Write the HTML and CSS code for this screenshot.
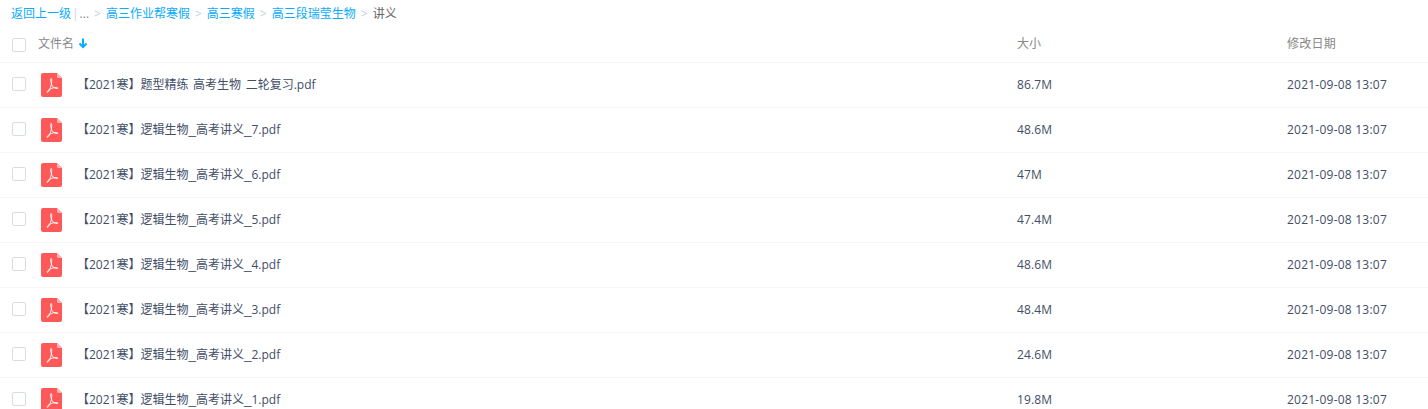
FILE: index.html
```html
<!DOCTYPE html>
<html lang="zh-CN">
<head>
<meta charset="utf-8">
<title>讲义</title>
<link rel="stylesheet" href="styles.css">
</head>
<body>
<svg class="defs" width="0" height="0">
	<symbol id="pdf" viewBox="0 0 21 24">
		<path d="M2 0H16L21 5V22a2 2 0 0 1-2 2H2a2 2 0 0 1-2-2V2a2 2 0 0 1 2-2Z" fill="#ff5858"/>
		<path d="M16 0L21 5H17.500a1.500 1.500 0 0 1-1.500-1.500Z" fill="#ffb4b4"/>
		<path d="M10 5.500C9 6 10 10 11 12.500C12 14.500 14 15.500 16 15.500C17.500 15.500 17 14.500 15 14.500C12 14.500 8 16 6.500 18C5.500 19.500 6.500 20 7.500 18.500C9 16.500 10.500 12.500 10.700 8.500C10.800 6.500 10.600 5.300 10 5.500Z" fill="none" stroke="#fff" stroke-width="1" stroke-opacity=".9"/>
	</symbol>
</svg>

<div class="crumbs">
	<a href="#">返回上一级</a><span class="pipe">|</span><span class="dots">...</span><span class="sep">&gt;</span><a href="#">高三作业帮寒假</a><span class="sep">&gt;</span><a href="#">高三寒假</a><span class="sep">&gt;</span><a href="#">高三段瑞莹生物</a><span class="sep">&gt;</span><span class="current">讲义</span>
</div>

<div class="row head">
	<span class="check"></span>
	<div class="name">文件名 <svg class="arrow" width="10" height="11" viewBox="0 0 10 11"><path d="M5 0.500V9M1.500 5.500L5 9L8.500 5.500" fill="none" stroke="#09aaff" stroke-width="2"/></svg></div>
	<div class="size">大小</div>
	<div class="date">修改日期</div>
</div>

<div class="row">
	<span class="check"></span>
	<svg class="icon"><use href="#pdf"/></svg>
	<div class="name">【2021寒】题型精练 高考生物 二轮复习.pdf</div>
	<div class="size">86.7M</div>
	<div class="date">2021-09-08 13:07</div>
</div>
<div class="row">
	<span class="check"></span>
	<svg class="icon"><use href="#pdf"/></svg>
	<div class="name">【2021寒】逻辑生物<span class="us">_</span>高考讲义<span class="us">_</span>7.pdf</div>
	<div class="size">48.6M</div>
	<div class="date">2021-09-08 13:07</div>
</div>
<div class="row">
	<span class="check"></span>
	<svg class="icon"><use href="#pdf"/></svg>
	<div class="name">【2021寒】逻辑生物<span class="us">_</span>高考讲义<span class="us">_</span>6.pdf</div>
	<div class="size">47M</div>
	<div class="date">2021-09-08 13:07</div>
</div>
<div class="row">
	<span class="check"></span>
	<svg class="icon"><use href="#pdf"/></svg>
	<div class="name">【2021寒】逻辑生物<span class="us">_</span>高考讲义<span class="us">_</span>5.pdf</div>
	<div class="size">47.4M</div>
	<div class="date">2021-09-08 13:07</div>
</div>
<div class="row">
	<span class="check"></span>
	<svg class="icon"><use href="#pdf"/></svg>
	<div class="name">【2021寒】逻辑生物<span class="us">_</span>高考讲义<span class="us">_</span>4.pdf</div>
	<div class="size">48.6M</div>
	<div class="date">2021-09-08 13:07</div>
</div>
<div class="row">
	<span class="check"></span>
	<svg class="icon"><use href="#pdf"/></svg>
	<div class="name">【2021寒】逻辑生物<span class="us">_</span>高考讲义<span class="us">_</span>3.pdf</div>
	<div class="size">48.4M</div>
	<div class="date">2021-09-08 13:07</div>
</div>
<div class="row">
	<span class="check"></span>
	<svg class="icon"><use href="#pdf"/></svg>
	<div class="name">【2021寒】逻辑生物<span class="us">_</span>高考讲义<span class="us">_</span>2.pdf</div>
	<div class="size">24.6M</div>
	<div class="date">2021-09-08 13:07</div>
</div>
<div class="row">
	<span class="check"></span>
	<svg class="icon"><use href="#pdf"/></svg>
	<div class="name">【2021寒】逻辑生物<span class="us">_</span>高考讲义<span class="us">_</span>1.pdf</div>
	<div class="size">19.8M</div>
	<div class="date">2021-09-08 13:07</div>
</div>
</body>
</html>
```

FILE: styles.css
```css
html, body { height: 100%; overflow: hidden; }
body {
	margin: 0;
	background: #fff;
	font-family: "Open Sans", "Noto Sans CJK SC", sans-serif;
	font-size: 12px;
	color: #424e67;
}
.defs { display: block; }
a { color: #09aaff; text-decoration: none; }

.crumbs {
	height: 25px;
	line-height: 26px;
	padding: 1px 0 0 11px;
	white-space: nowrap;
}
.crumbs .pipe { color: #c5d9ea; margin: 0 1px; }
.crumbs .dots { color: #888; }
.crumbs .sep { color: #c5d0d9; margin: 0 5px; }
.crumbs .current { color: #666; }

.row {
	display: flex;
	align-items: center;
	height: 44px;
	line-height: 16px;
	border-bottom: 1px solid #f4f6fb;
	padding-left: 12px;
}
.row.head { height: 36px; color: #888; }
.check {
	flex: none;
	width: 12px;
	height: 12px;
	border: 1px solid #d8dde5;
	border-radius: 2px;
	margin: 0 15px 2px 0;
}
.head .check { margin: 2px 12px 0 0; }
.icon {
	flex: none;
	width: 21px;
	height: 24px;
	margin-right: 15px;
}
.name { flex: none; width: 940px; white-space: nowrap; word-spacing: 1.500px; }
.name .us { font-family: "Liberation Sans", sans-serif; font-size: 13.500px; line-height: 0; }
.head .name { width: 979px; word-spacing: 0; }
.arrow { margin-left: 1px; vertical-align: -1px; }
.size { flex: none; width: 270px; letter-spacing: 0.1px; }
.date { flex: none; letter-spacing: 0.23px; }
```
